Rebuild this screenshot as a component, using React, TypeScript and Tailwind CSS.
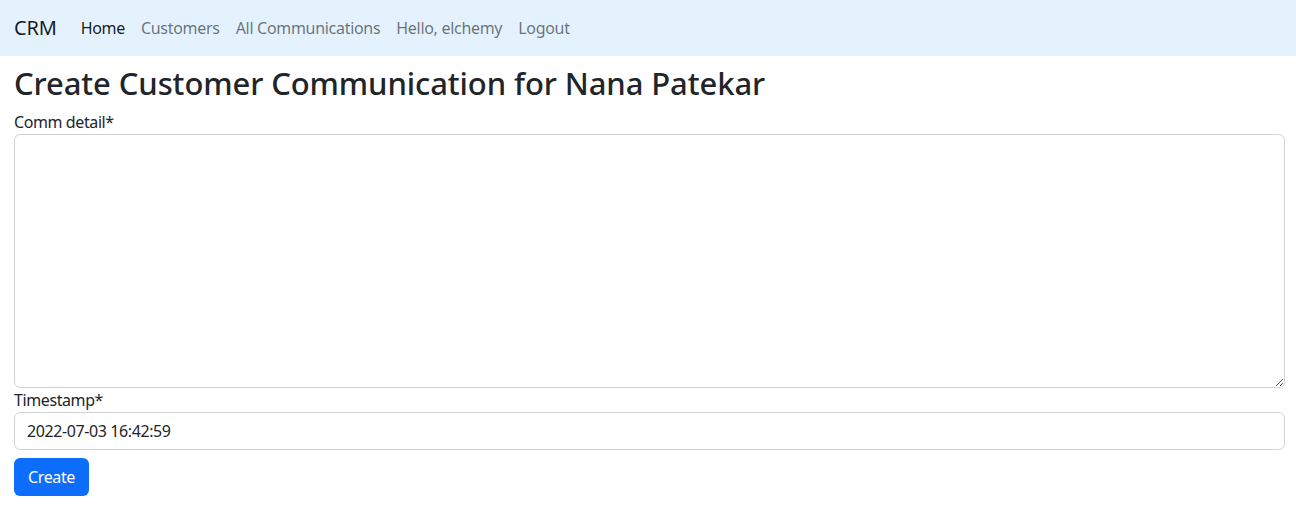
const navLinks = [
  { label: "Home", active: true },
  { label: "Customers", active: false },
  { label: "All Communications", active: false },
  { label: "Hello, elchemy", active: false },
  { label: "Logout", active: false },
];

const App = () => {
  return (
    <div className="min-h-screen bg-white text-[#212529] font-['Noto_Sans',sans-serif] tracking-[-0.4px]">
      <nav className="flex items-center h-14 bg-[#e3f2fd] pl-[14px] pr-3">
        <a href="#" className="text-[20px] text-black/90 mr-[16px] tracking-[-0.2px]">
          CRM
        </a>
        <ul className="flex items-center">
          {navLinks.map((link) => (
            <li key={link.label}>
              <a
                href="#"
                className={`block px-2 py-2 text-[16px] tracking-[-0.3px] ${link.active ? "text-black/90" : "text-black/55"}`}
              >
                {link.label}
              </a>
            </li>
          ))}
        </ul>
      </nav>

      <main className="pl-[14px] pr-[11px]">
        <h1 className="h-[54px] pt-[7px] text-[31px] leading-[40px] font-medium tracking-[-0.1px]">
          Create Customer Communication for Nana Patekar
        </h1>
        <form className="flex flex-col">
          <label className="text-[16px] leading-6">Comm detail*</label>
          <textarea className="h-[254px] w-full rounded-[6px] border border-[#ced4da] px-3 py-1.5 text-[16px] outline-none" />
          <label className="text-[16px] leading-6">Timestamp*</label>
          <input
            type="text"
            defaultValue="2022-07-03 16:42:59"
            className="h-[38px] w-full rounded-[6px] border border-[#ced4da] px-3 text-[16px] text-[#212529] outline-none"
          />
          <div className="mt-2">
            <button
              type="button"
              className="h-[38px] w-[75px] rounded-[6px] bg-[#0d6efd] text-[16px] text-white"
            >
              Create
            </button>
          </div>
        </form>
      </main>
    </div>
  );
};

export default App;
